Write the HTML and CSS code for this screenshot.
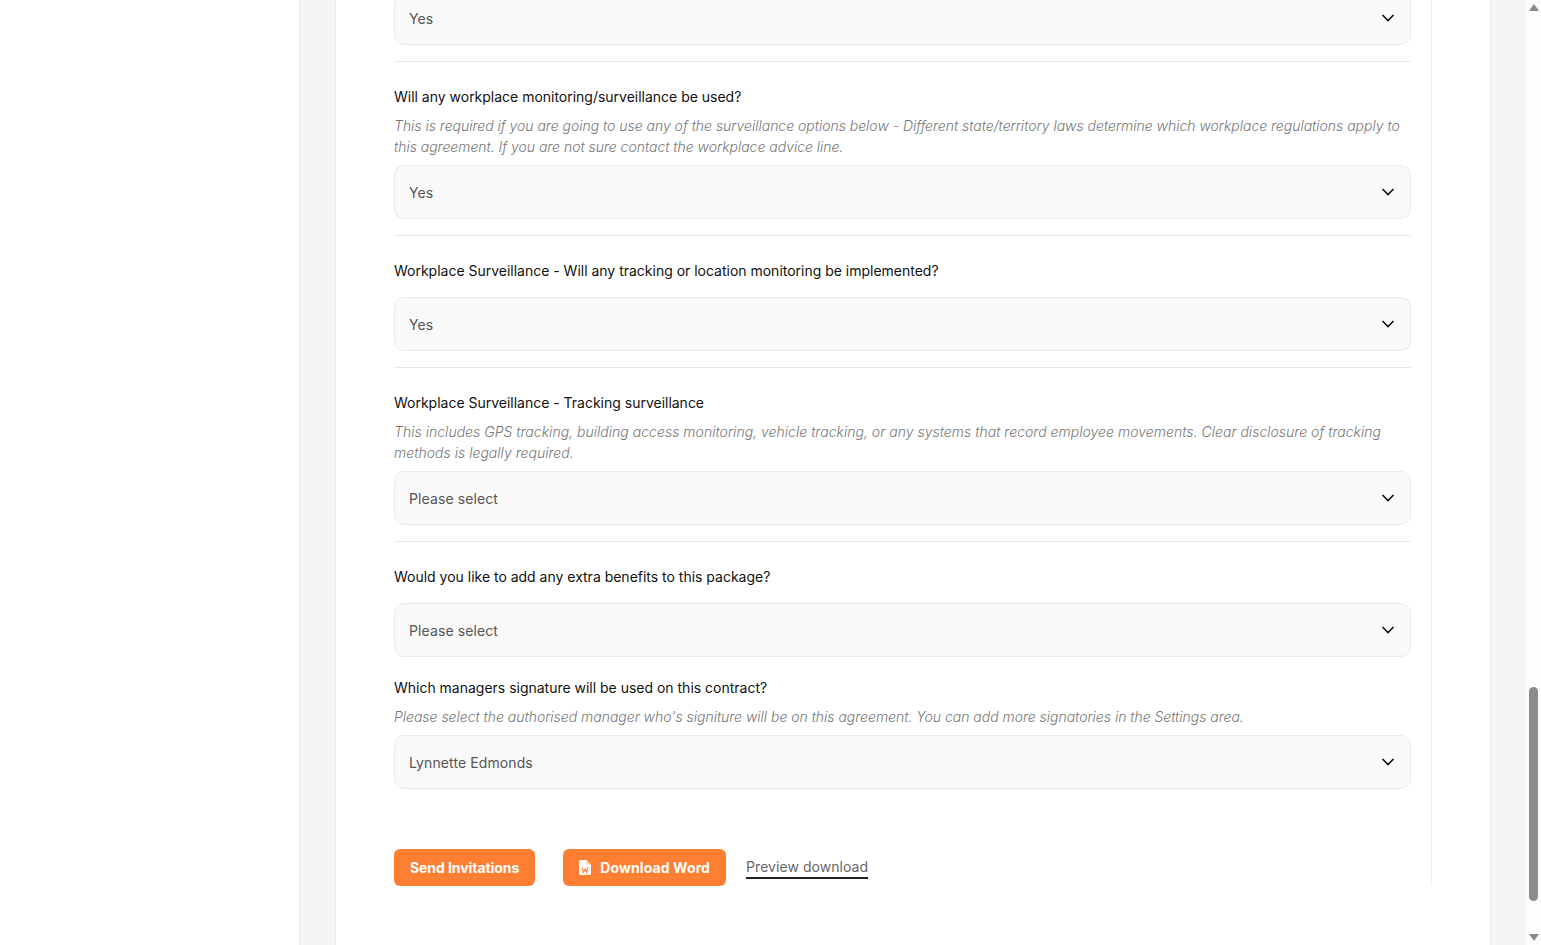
FILE: index.html
```html
<!DOCTYPE html>
<html lang="en">
<head>
<meta charset="utf-8">
<title>Contract form</title>
<link rel="stylesheet" href="styles.css">
</head>
<body>
<div class="app">
  <aside class="sidebar"></aside>
  <main class="canvas">
    <div class="panel">
      <form class="form">
        <div class="field field-clipped">
          <div class="select"><span>Yes</span><svg class="chev" viewBox="0 0 14 9"><path d="M1.500 1 7 6.500 12.500 1"/></svg></div>
        </div>
        <div class="field">
          <label class="label">Will any workplace monitoring/surveillance be used?</label>
          <p class="help">This is required if you are going to use any of the surveillance options below - Different state/territory laws determine which workplace regulations apply to this agreement. If you are not sure contact the workplace advice line.</p>
          <div class="select"><span>Yes</span><svg class="chev" viewBox="0 0 14 9"><path d="M1.500 1 7 6.500 12.500 1"/></svg></div>
        </div>
        <div class="field">
          <label class="label">Workplace Surveillance - Will any tracking or location monitoring be implemented?</label>
          <div class="select"><span>Yes</span><svg class="chev" viewBox="0 0 14 9"><path d="M1.500 1 7 6.500 12.500 1"/></svg></div>
        </div>
        <div class="field">
          <label class="label">Workplace Surveillance - Tracking surveillance</label>
          <p class="help help-wide">This includes GPS tracking, building access monitoring, vehicle tracking, or any systems that record employee movements. Clear disclosure of tracking methods is legally required.</p>
          <div class="select"><span>Please select</span><svg class="chev" viewBox="0 0 14 9"><path d="M1.500 1 7 6.500 12.500 1"/></svg></div>
        </div>
        <div class="field field-plain">
          <label class="label">Would you like to add any extra benefits to this package?</label>
          <div class="select"><span>Please select</span><svg class="chev" viewBox="0 0 14 9"><path d="M1.500 1 7 6.500 12.500 1"/></svg></div>
        </div>
        <div class="field field-last">
          <label class="label">Which managers signature will be used on this contract?</label>
          <p class="help">Please select the authorised manager who's signiture will be on this agreement. You can add more signatories in the Settings area.</p>
          <div class="select"><span>Lynnette Edmonds</span><svg class="chev" viewBox="0 0 14 9"><path d="M1.500 1 7 6.500 12.500 1"/></svg></div>
        </div>
        <div class="actions">
          <button type="button" class="btn">Send Invitations</button>
          <button type="button" class="btn btn-icon">
            <svg class="word" viewBox="0 0 12 15"><path d="M1.500 0H7.500L12 4.500V13.500A1.500 1.500 0 0 1 10.500 15H1.500A1.500 1.500 0 0 1 0 13.500V1.500A1.500 1.500 0 0 1 1.500 0Z" fill="#fff"/><path d="M7.500 0V4.500H12Z" fill="#ffc9a3"/><path d="M3 7.500 4.500 12.500 6 9 7.500 12.500 9 7.500" fill="none" stroke="#ff7f32" stroke-width="1.100"/></svg>
            Download Word
          </button>
          <a class="link" href="#">Preview download</a>
        </div>
      </form>
    </div>
  </main>
  <div class="scrollbar">
    <span class="arrow arrow-up"></span>
    <div class="track"><div class="thumb"></div></div>
    <span class="arrow arrow-down"></span>
  </div>
</div>
</body>
</html>
```
FILE: styles.css
```css
* { box-sizing: border-box; }
html, body { margin: 0; height: 100%; overflow: hidden; background: #fff; }
body { font-family: Inter, "Liberation Sans", sans-serif; color: #111; }

.app { display: flex; height: 945px; }
.sidebar { width: 299px; flex: none; background: #fff; }
.canvas {
  flex: 1; min-width: 0;
  background: #f5f5f5;
  border-left: 1px solid #e9e9e9;
  padding: 0 35px;
  overflow: hidden;
}
.panel {
  display: flow-root;
  height: 100%;
  background: #fff;
  border-left: 1px solid #ececec;
  border-right: 1px solid #ececec;
  padding: 0 58px;
}
.form {
  border-right: 1px solid #efefef;
  padding-right: 20px;
  width: 1038px;
  margin-top: -9px;
}
.field { padding: 24px 0 16px; border-bottom: 1px solid #e8e8e8; }
.field-clipped { padding-top: 0; }
.field-plain { border-bottom: 0; padding-bottom: 20px; }
.field-last { border-bottom: 0; padding: 0 0 60px; }

.label { display: block; font-size: 14px; line-height: 21px; font-weight: 400; color: #111; letter-spacing: -0.01px; margin-bottom: 16px; }
.label:has(+ .help) { margin-bottom: 8px; }
.help { margin: 0 0 8px; font-size: 14px; line-height: 21px; font-style: italic; font-weight: 300; color: #777; letter-spacing: -0.02px; }
.help-wide { letter-spacing: 0.02px; }

.select {
  height: 54px;
  display: flex; align-items: center; justify-content: space-between;
  padding: 0 15px 0 14px;
  background: #f9f9f9;
  border: 1px solid #ebebeb;
  border-radius: 10px;
  font-size: 14px;
  letter-spacing: 0.1px;
  color: #555;
}
.chev { width: 14px; height: 9px; fill: none; stroke: #111; stroke-width: 1.600; }

.actions { display: flex; align-items: center; height: 37px; }
.btn {
  height: 37px;
  display: inline-flex; align-items: center; gap: 9px;
  padding: 0 16px;
  border: 0; border-radius: 6px;
  background: #ff7f32; color: #fff;
  font: 700 14px Inter, "Liberation Sans", sans-serif;
  letter-spacing: -0.07px;
  margin-right: 28px;
}
.btn-icon { margin-right: 20px; letter-spacing: 0.1px; }
.word { width: 12px; height: 15px; }
.link {
  color: #666; font-size: 14px; line-height: 21px; text-decoration: none; letter-spacing: 0.05px;
  border-bottom: 2px solid #222;
}

.scrollbar { width: 15px; flex: none; background: #fdfdfd; display: flex; flex-direction: column; align-items: center; padding: 4px 0; }
.arrow { width: 0; height: 0; border-left: 5px solid transparent; border-right: 5px solid transparent; flex: none; }
.arrow-up { border-bottom: 7px solid #8a8a8a; }
.arrow-down { border-top: 7px solid #8a8a8a; }
.track { flex: 1; width: 100%; display: flex; flex-direction: column; justify-content: flex-end; align-items: center; padding-bottom: 33px; }
.thumb { width: 9px; height: 214px; border-radius: 5px; background: #8c8c8c; }
```
